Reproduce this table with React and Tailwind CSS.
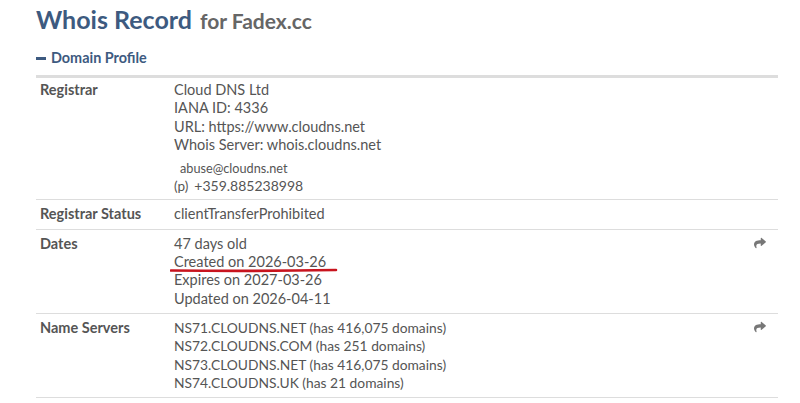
import React from "react";
import { FaShare } from "react-icons/fa";

function Row({ label, children, share, className = "py-[5px]" }) {
  return (
    <div className={"relative flex border-b border-[#dddddd] text-[14.5px] leading-[18.3px] " + className}>
      <div className="w-[138px] shrink-0 pl-[4px] font-bold text-[#555555]">{label}</div>
      <div className="flex-1 text-[#555555]">{children}</div>
      {share && (
        <div className="absolute right-[12px] top-[7px] text-[#777777]">
          <FaShare size={12} />
        </div>
      )}
    </div>
  );
}

export default function App() {
  return (
    <div
      className="w-[800px] h-[403px] overflow-hidden bg-white px-[36px] pt-[2px]"
      style={{ fontFamily: "Lato, 'Open Sans', sans-serif" }}
    >
      <div className="flex items-baseline gap-[8px] leading-[34px]">
        <span className="text-[25px] font-bold text-[#3d5a80]">Whois Record</span>
        <span className="text-[21px] font-bold text-[#666666]">for Fadex.cc</span>
      </div>
      <div className="mt-[11px] flex items-center gap-[5px] text-[14.4px] font-bold text-[#3d5a80] leading-[18px]">
        <span className="inline-block h-[3px] w-[10px] bg-[#3d5a80]" />
        <span>Domain Profile</span>
      </div>
      <div className="mt-[8px] w-[742px] border-t-[3px] border-[#dddddd]">
        <Row label="Registrar" className="pt-[3px] pb-[4px]">
          <div>Cloud DNS Ltd</div>
          <div>IANA ID: 4336</div>
          <div>URL: https://www.cloudns.net</div>
          <div>Whois Server: whois.cloudns.net</div>
          <div className="mt-[6px] pl-[6px] text-[12.7px] leading-[17px]">abuse@cloudns.net</div>
          <div>
            <span className="mr-[6px] text-[13.5px]">(p)</span>
            <span className="text-[14px]">+359.885238998</span>
          </div>
        </Row>
        <Row label="Registrar Status">
          <div>clientTransferProhibited</div>
        </Row>
        <Row label="Dates" share>
          <div>47 days old</div>
          <div className="relative">
            Created on 2026-03-26
            <svg
              className="absolute left-[-4px] top-[15px]"
              width="170"
              height="6"
              viewBox="0 0 170 6"
            >
              <path d="M1 2.5 Q 85 3.5 166 2" stroke="#c8141e" strokeWidth="2.6" fill="none" strokeLinecap="round" />
            </svg>
          </div>
          <div>Expires on 2027-03-26</div>
          <div>Updated on 2026-04-11</div>
        </Row>
        <Row label="Name Servers" share>
          <div className="text-[13.8px]">
            <div>NS71.CLOUDNS.NET (has 416,075 domains)</div>
            <div>NS72.CLOUDNS.COM (has 251 domains)</div>
            <div>NS73.CLOUDNS.NET (has 416,075 domains)</div>
            <div>NS74.CLOUDNS.UK (has 21 domains)</div>
          </div>
        </Row>
      </div>
    </div>
  );
}
